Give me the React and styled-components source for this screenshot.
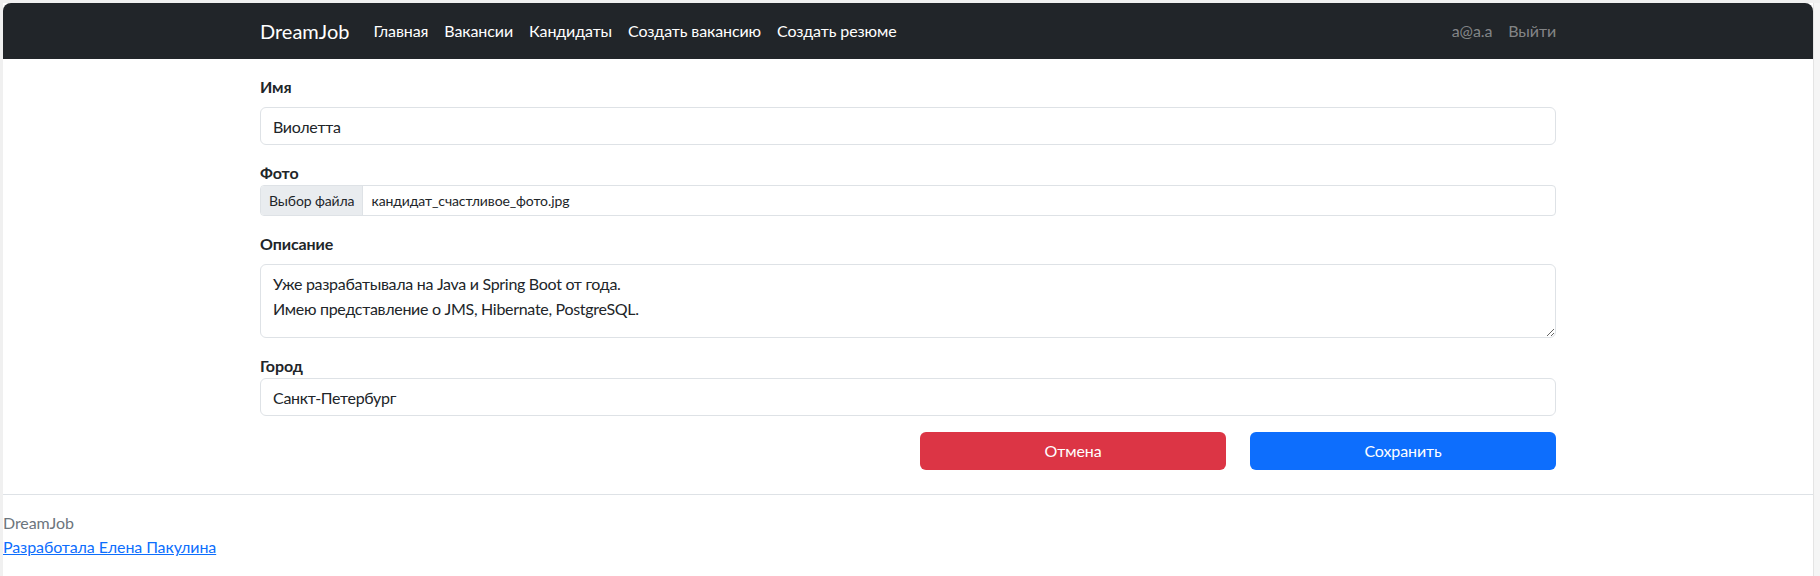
import React from "react";
import styled, {createGlobalStyle} from "styled-components";

const GlobalStyle = createGlobalStyle`
  html, body {
    margin: 0;
    padding: 0;
    background: #f0f0f0;
  }
  * {
    box-sizing: border-box;
  }
  body {
    font-family: Lato, "Noto Sans", "Liberation Sans", sans-serif;
    font-size: 16px;
    line-height: 1.5;
    letter-spacing: -0.1px;
    color: #212529;
  }
`

const navLinks = ['Главная', 'Вакансии', 'Кандидаты', 'Создать вакансию', 'Создать резюме'];

function App() {
  return (
      <>
        <GlobalStyle/>
        <Frame>
          <Page>
            <Navbar>
              <NavContainer>
                <Brand href="#">DreamJob</Brand>
                <NavList>
                  {navLinks.map(link => <NavLink key={link} href="#">{link}</NavLink>)}
                </NavList>
                <NavList>
                  <NavLink href="#" muted>a@a.a</NavLink>
                  <NavLink href="#" muted>Выйти</NavLink>
                </NavList>
              </NavContainer>
            </Navbar>

            <Container>
              <Form>
                <Field>
                  <Label spaced>Имя</Label>
                  <Input type="text" defaultValue="Виолетта"/>
                </Field>
                <Field>
                  <Label>Фото</Label>
                  <FileInput>
                    <FileButton>Выбор файла</FileButton>
                    <FileName>кандидат_счастливое_фото.jpg</FileName>
                  </FileInput>
                </Field>
                <Field>
                  <Label spaced>Описание</Label>
                  <TextArea defaultValue={'Уже разрабатывала на Java и Spring Boot от года.\nИмею представление о JMS, Hibernate, PostgreSQL.'}/>
                </Field>
                <Field>
                  <Label>Город</Label>
                  <Input type="text" defaultValue="Санкт-Петербург"/>
                </Field>
                <ButtonRow>
                  <Button color="#dc3545" start={7}>Отмена</Button>
                  <Button color="#0d6efd" start={10}>Сохранить</Button>
                </ButtonRow>
              </Form>
            </Container>

            <Footer>
              <FooterBrand>DreamJob</FooterBrand>
              <FooterLink href="#">Разработала Елена Пакулина</FooterLink>
            </Footer>
          </Page>
          <ScrollTrack/>
        </Frame>
      </>
  );
}

export default App;

const Frame = styled.div`
  display: flex;
  min-height: 100vh;
  padding: 3px 0 0 3px;
`

const Page = styled.div`
  flex: 1;
  background: white;
`

const ScrollTrack = styled.div`
  width: 7px;
  background: #f5f5f5;
  border-left: 1px solid #e4e4e4;
`

const Navbar = styled.nav`
  background: #212529;
  border-radius: 8px 8px 0 0;
  padding: 8px 0;
`

const NavContainer = styled.div`
  max-width: 1320px;
  margin: 0 auto;
  padding: 0 12px;
  display: flex;
  align-items: center;
`

const Brand = styled.a`
  color: white;
  text-decoration: none;
  font-size: 20px;
  line-height: 30px;
  letter-spacing: normal;
  padding: 5px 0;
  margin-right: 16px;
`

const NavList = styled.div`
  display: flex;
  
  &:last-child {
    margin-left: auto;
  }
`

const NavLink = styled.a`
  color: ${props => props.muted ? 'rgba(255, 255, 255, 0.45)' : 'white'};
  text-decoration: none;
  padding: 8px;
  line-height: 24px;

  &:last-child {
    padding-right: 0;
  }
`

const Container = styled.main`
  max-width: 1320px;
  margin: 0 auto;
  padding: 16px 12px 0 12px;
`

const Form = styled.form`
  display: flex;
  flex-direction: column;
  gap: 16px;
`

const Field = styled.div`
  display: flex;
  flex-direction: column;
`

const Label = styled.label`
  font-weight: bold;
  margin-bottom: ${props => props.spaced ? '8px' : '0'};
`

const Input = styled.input`
  font: inherit;
  letter-spacing: -0.3px;
  color: #212529;
  padding: 6px 12px;
  height: 38px;
  border: 1px solid #dee2e6;
  border-radius: 6px;
  background: white;

  :focus {
    outline: none;
  }
`

const FileInput = styled.div`
  display: flex;
  height: 31px;
  border: 1px solid #dee2e6;
  border-radius: 4px;
  overflow: hidden;
  font-size: 14px;
  line-height: 21px;
`

const FileButton = styled.span`
  background: #e9ecef;
  border-right: 1px solid #dee2e6;
  padding: 4px 8px;
`

const FileName = styled.span`
  padding: 4px 8px;
`

const TextArea = styled.textarea`
  font: inherit;
  letter-spacing: -0.3px;
  color: #212529;
  height: 74px;
  padding: 6px 12px;
  line-height: 25px;
  border: 1px solid #dee2e6;
  border-radius: 6px;
  resize: vertical;

  :focus {
    outline: none;
  }
`

const ButtonRow = styled.div`
  display: grid;
  grid-template-columns: repeat(12, 1fr);
  column-gap: 24px;
  margin-bottom: 24px;
`

const Button = styled.button`
  grid-column: ${props => props.start} / span 3;
  height: 38px;
  font: inherit;
  letter-spacing: inherit;
  color: white;
  background: ${props => props.color};
  border: none;
  border-radius: 6px;
`

const Footer = styled.footer`
  border-top: 1px solid #dee2e6;
  padding-top: 16px;
  display: flex;
  flex-direction: column;
  align-items: flex-start;
`

const FooterBrand = styled.span`
  color: #6c757d;
`

const FooterLink = styled.a`
  color: #0d6efd;
`
